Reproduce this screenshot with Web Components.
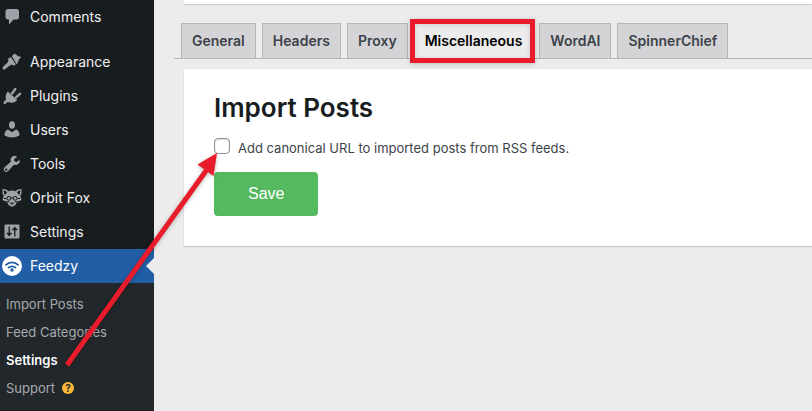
<!DOCTYPE html>
<html lang="en">
<head>
<meta charset="utf-8">
<title>Feedzy Settings</title>
<style>
body { margin: 0; background: #ececec; font-family: Inter, "Liberation Sans", sans-serif; color: #3c434a; }
</style>
</head>
<body>
<feedzy-app></feedzy-app>
<script>
const ICONS = {
  comments: '<path d="M6.500 1h8q2.500 0 2.500 2.500V9q0 2.500-2.500 2.500h-3L7 16.500v-5h-.500Q3.500 11.500 3.500 9V3.500Q3.500 1 6.500 1z"/>',
  appearance: '<path d="M9.800 3L12.800.500q2.500 3 6.700 3.500Q16.500 5.500 15.500 10.500l-1 .500zM8.800 4L13.800 11.300l-1.600 1.500q-1.700-1.500-3.700-.700L3.700 15.700Q1.700 17.300.800 16T1.500 13.200l4.300-4Q7 7.300 6 5.800z"/>',
  plugins: '<path d="M5.800 4.500L15.300 13q-2.800 3.500-7.300 2.500-1.500-.300-2.200-.600L3.500 16.800q-1.500.600-2-.200t.600-2.200l2-1.900Q2.700 8.500 5.800 4.500z"/><path d="M10 6.500L13.300 2M14 10.300l4-3.500" fill="none" stroke="#9ca2a7" stroke-width="2.400" stroke-linecap="round"/>',
  users: '<ellipse cx="10" cy="4" rx="3" ry="3.800"/><path d="M6 8.500l4 2.700 4-2.700q3.500 1 3.500 6Q14 16.500 10 16.500t-7.500-2q0-5 3.500-6z"/>',
  tools: '<path d="M17.600 4.800l-3.100 2.200-2.200-.700-.100-2.200 3-2.300Q11-.800 8.800 3.300q-.600 1.600.200 3.200L2.700 12.200Q.700 14.200 2.300 16t3.900 0L12 9.700q3.500.900 5.300-1.700.900-1.600.3-3.200zM4.200 13.400a1.200 1.200 0 1 1 0 2.400 1.200 1.200 0 0 1 0-2.400z" fill-rule="evenodd"/>',
  fox: '<path d="M.500 0Q4-.500 6.500 2.200q3.500-1.200 7 0 2.500-2.700 6-2.200.800 4-1.200 7l1.200 4-4.500 2-1.500 3-3.500 2-3.500-2-1.500-3-4.500-2L1.700 7Q-.300 4 .500 0z"/><g fill="none" stroke="#171c1e" stroke-width="1"><path d="M2 1.700l2.600 1.500L3 5.500zM18 1.700l-2.600 1.500L17 5.500z" fill="#171c1e"/><circle cx="6.800" cy="9.300" r="1.900"/><circle cx="13.200" cy="9.300" r="1.900"/><path d="M8.800 9h2.400M2 9.500h2.500M18 9.500h-2.500M4.500 12.500l3 .500M15.500 12.500l-3 .500"/></g><ellipse cx="10" cy="14.500" rx="1.600" ry="1" fill="#171c1e"/>',
  settings: '<path d="M3.500 1.500h13q1 0 1 1v12q0 1-1 1h-13q-1 0-1-1v-12q0-1 1-1z"/><path d="M7.200 3.500v9M12.800 4.500v9M10.300 6.500h5M4.700 10.500h5" stroke="#171c1e" stroke-width="1.300"/><path d="M5 10.500l2.200 3 2.200-3zM10.600 6.500l2.200-3 2.200 3z" fill="#171c1e"/>',
  feedzy: '<circle cx="10" cy="9" r="10" fill="#fff"/><g fill="none" stroke="#215ea6" stroke-width="1.700"><path d="M3.300 8.300q6.700-5.800 13.400 0M6 11q4-3.400 8 0"/></g><circle cx="10" cy="13" r="1.700" fill="#215ea6"/>'
};

function define(name, template, setup) {
  const t = document.createElement('template');
  t.innerHTML = template;
  customElements.define(name, class extends HTMLElement {
    connectedCallback() {
      if (this.shadowRoot) return;
      this.attachShadow({ mode: 'open' }).append(t.content.cloneNode(true));
      if (setup) setup(this, this.shadowRoot);
    }
  });
}

define('menu-item', `
<style>
:host { display: block; }
a { position: relative; display: flex; align-items: center; gap: 8px; height: 34px; padding-left: 2px; color: #f0f0f1; font-size: 14px; line-height: 20px; text-decoration: none; }
svg { width: 20px; height: 20px; fill: #9ca2a7; overflow: visible; flex: none; }
:host([current]) a { background: #215ea6; color: #fff; }
:host([current]) a::after { content: ""; position: absolute; right: 0; top: 9px; border: 8px solid transparent; border-left: 0; border-right-color: #ececec; }
</style>
<a href="#"><svg viewBox="0 -1 20 20" aria-hidden="true"></svg><slot></slot></a>`,
(el, root) => {
  root.querySelector('svg').innerHTML = ICONS[el.getAttribute('icon')];
  if (el.hasAttribute('current')) root.querySelector('a').setAttribute('aria-current', 'page');
});

define('submenu-item', `
<style>
:host { display: block; }
a { display: flex; align-items: center; gap: 7px; height: 28px; padding-left: 6px; color: #a7aaad; font-size: 13px; line-height: 18px; text-decoration: none; }
:host([current]) a { color: #fff; font-weight: 600; }
::slotted(b) { width: 12px; height: 12px; border-radius: 50%; background: #fbb836; color: #22272b; font-size: 10px; line-height: 12px; text-align: center; }
</style>
<a href="#"><slot></slot></a>`);

define('admin-menu', `
<style>
:host { display: block; background: #171c1e; }
.gap { height: 11px; }
.sub { padding: 7px 0 8px; background: #22272b; }
</style>
<nav aria-label="Admin menu">
<menu-item icon="comments">Comments</menu-item>
<div class="gap"></div>
<menu-item icon="appearance">Appearance</menu-item>
<menu-item icon="plugins">Plugins</menu-item>
<menu-item icon="users">Users</menu-item>
<menu-item icon="tools">Tools</menu-item>
<menu-item icon="fox">Orbit Fox</menu-item>
<menu-item icon="settings">Settings</menu-item>
<menu-item icon="feedzy" current>Feedzy</menu-item>
<div class="sub">
<submenu-item>Import Posts</submenu-item>
<submenu-item>Feed Categories</submenu-item>
<submenu-item current>Settings</submenu-item>
<submenu-item>Support<b>?</b></submenu-item>
</div>
</nav>`);

define('nav-tab', `
<style>
:host { display: block; position: relative; margin-bottom: -1px; }
a { display: block; padding: 5px 10px; border: 1px solid #b4b6b9; background: #d4d4d6; color: #3c434a; font-size: 14px; font-weight: 600; line-height: 24px; text-decoration: none; white-space: nowrap; }
:host([active]) a { background: #ececec; border-color: #ececec; color: #000; }
:host([active])::after { content: ""; position: absolute; inset: -4px -2px -4px -4px; border: 5px solid #e81c2a; box-shadow: 0 1px 5px #0003, inset 0 1px 5px #0002; pointer-events: none; }
</style>
<a href="#"><slot></slot></a>`);

define('tab-bar', `
<style>
:host { display: flex; gap: 6px; padding-left: 7px; border-bottom: 1px solid #b4b6b9; }
</style>
<slot></slot>`);

define('content-card', `
<style>
:host { display: block; background: #fff; box-shadow: 0 1px 1px #0002, 0 0 1px #0002; }
</style>
<slot></slot>`);

define('import-form', `
<style>
:host { display: block; padding: 21px 30px 30px; }
h1 { margin: 0; color: #171c1e; font-size: 26px; font-weight: 600; line-height: 36px; }
.row { display: flex; align-items: center; gap: 8px; margin: 12px 0 14px; font-size: 13px; line-height: 20px; }
input { appearance: none; box-sizing: border-box; flex: none; width: 16px; height: 16px; margin: 0 0 4px; border: 1px solid #8c8f94; border-radius: 4px; background: #fff; box-shadow: inset 0 1px 2px #0002; }
button { display: block; height: 44px; padding: 0 34px; border: 0; border-radius: 4px; background: #54b95f; color: #fff; font: 16px/24px "Liberation Sans", sans-serif; }
</style>
<form>
<h1>Import Posts</h1>
<div class="row"><input type="checkbox" id="canonical"><label for="canonical">Add canonical URL to imported posts from RSS feeds.</label></div>
<button type="button">Save</button>
</form>`);

define('pointer-arrow', `
<style>
:host { position: absolute; left: 60px; top: 148px; pointer-events: none; }
svg { display: block; overflow: visible; filter: drop-shadow(0 1px 2px #0004); }
</style>
<svg width="165" height="225" aria-hidden="true" fill="#e81c2a"><path d="M7 217L148 20" stroke="#e81c2a" stroke-width="5"/><path d="M157 5L137.500 16.500 153.500 28z"/></svg>`);

define('feedzy-app', `
<style>
:host { display: grid; grid-template-columns: 154px minmax(0, 1fr); min-height: 100vh; position: relative; overflow: hidden; }
main { padding-left: 20px; }
content-card { margin-left: 10px; }
.top { height: 4px; margin-bottom: 19px; }
tab-bar { margin-bottom: 10px; }
</style>
<admin-menu></admin-menu>
<main>
<content-card class="top"></content-card>
<tab-bar>
<nav-tab>General</nav-tab><nav-tab>Headers</nav-tab><nav-tab>Proxy</nav-tab><nav-tab active>Miscellaneous</nav-tab><nav-tab>WordAI</nav-tab><nav-tab>SpinnerChief</nav-tab>
</tab-bar>
<content-card><import-form></import-form></content-card>
</main>
<pointer-arrow></pointer-arrow>`);
</script>
</body>
</html>
